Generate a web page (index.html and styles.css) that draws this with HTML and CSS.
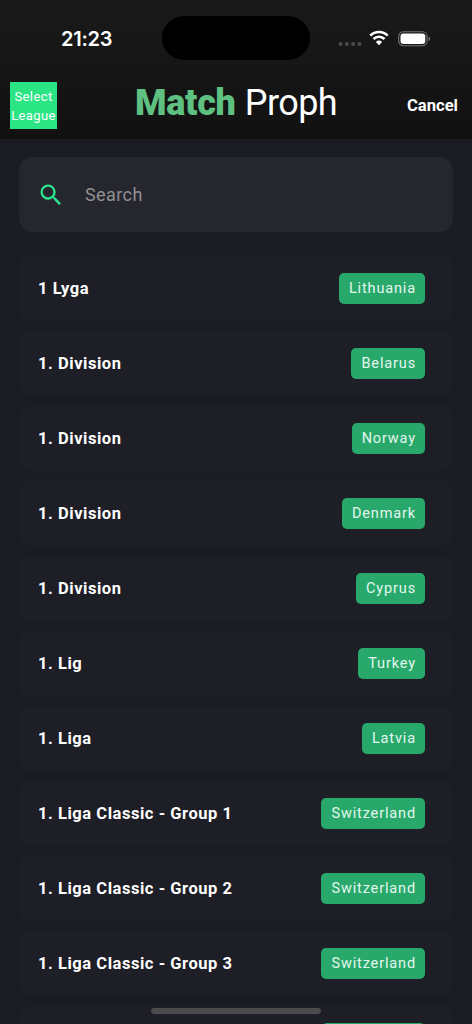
FILE: index.html
```
<!DOCTYPE html>
<html lang="en">
<head>
<meta charset="utf-8">
<title>Match Proph</title>
<link rel="stylesheet" href="styles.css">
</head>
<body>
<div class="screen">
  <header class="header">
    <div class="status">
      <span class="time">21:23</span>
      <span class="island"></span>
      <div class="indicators">
        <svg class="dots" width="24" height="6" viewBox="0 0 24 6" fill="#4b4b4b"><circle cx="2.5" cy="3" r="2.1"/><circle cx="8.8" cy="3" r="2.1"/><circle cx="15.1" cy="3" r="2.1"/><circle cx="21.4" cy="3" r="2.1"/></svg>
        <svg class="wifi" width="20" height="16" viewBox="0 0 20 16"><path d="M1.3 5.6a12.3 12.3 0 0 1 17.4 0M4.5 9a7.8 7.8 0 0 1 11 0" fill="none" stroke="#fff" stroke-width="2.7"/><path d="M6.9 11.9a4.4 4.4 0 0 1 6.2 0L10 15.2z" fill="#fff"/></svg>
        <svg class="battery" width="33" height="16" viewBox="0 0 33 16"><rect x=".7" y=".7" width="28.4" height="14" rx="4.6" fill="none" stroke="#747474" stroke-width="1.1"/><rect x="2.5" y="2.4" width="24.8" height="10.6" rx="3" fill="#fff"/><path d="M30.6 5.4c2 .7 2 4 0 4.7z" fill="#747474"/></svg>
      </div>
    </div>
    <div class="toolbar">
      <button class="select">Select<br>League</button>
      <h1 class="brand"><b class="brand-match">Match</b><span class="brand-proph">Proph</span></h1>
      <button class="cancel">Cancel</button>
    </div>
  </header>
  <main class="content">
    <div class="search">
      <svg class="search-icon" width="28" height="28" viewBox="0 0 24 24" fill="#2be58a"><path d="M15.5 14h-.79l-.28-.27A6.47 6.47 0 0 0 16 9.5 6.5 6.5 0 1 0 9.5 16c1.61 0 3.09-.59 4.23-1.57l.27.28v.79l5 4.99L20.49 19l-4.99-5zm-6 0C7.01 14 5 11.99 5 9.5S7.01 5 9.5 5 14 7.01 14 9.5 11.99 14 9.5 14z"/></svg>
      <span class="placeholder">Search</span>
    </div>
    <ul class="leagues">
      <li class="league"><b class="name">1 Lyga</b><span class="country">Lithuania</span></li>
      <li class="league"><b class="name">1. Division</b><span class="country">Belarus</span></li>
      <li class="league"><b class="name">1. Division</b><span class="country">Norway</span></li>
      <li class="league"><b class="name">1. Division</b><span class="country">Denmark</span></li>
      <li class="league"><b class="name">1. Division</b><span class="country">Cyprus</span></li>
      <li class="league"><b class="name">1. Lig</b><span class="country">Turkey</span></li>
      <li class="league"><b class="name">1. Liga</b><span class="country">Latvia</span></li>
      <li class="league"><b class="name">1. Liga Classic - Group 1</b><span class="country">Switzerland</span></li>
      <li class="league"><b class="name">1. Liga Classic - Group 2</b><span class="country">Switzerland</span></li>
      <li class="league"><b class="name">1. Liga Classic - Group 3</b><span class="country">Switzerland</span></li>
      <li class="league"><span class="name"></span><span class="country country-wide"></span></li>
    </ul>
  </main>
  <div class="home-bar"></div>
</div>
</body>
</html>
```
FILE: styles.css
```
* { box-sizing: border-box; }
body { margin: 0; background: #1b1b24; font-family: Roboto, sans-serif; color: #fff; }
button { border: 0; background: none; color: inherit; font-family: inherit; padding: 0; }
.screen { position: relative; height: 1024px; overflow: hidden; }
.header { height: 139px; background: linear-gradient(#1a1a1a, #111); }
.status { height: 82px; padding: 16px 41px 0 61px; display: grid; grid-template-columns: 101px 148px 1fr; align-items: start; }
.time { font: 600 20px/24px Inter, sans-serif; letter-spacing: -.25px; margin-top: 11px; }
.island { height: 44px; border-radius: 22px; background: #000; }
.indicators { display: flex; justify-content: flex-end; height: 44px; align-items: center; }
.dots { margin: 11px 7px 0 0; }
.wifi { margin-right: 9px; }
.battery { margin: 1px 0 0; }
.toolbar { display: grid; grid-template-columns: 125px 202px 1fr; padding: 0 14px 0 10px; height: 57px; }
.select { width: 47px; height: 47px; background: #2be585; font-size: 13px; line-height: 19px; letter-spacing: .4px; white-space: nowrap; display: flex; align-items: center; justify-content: center; }
.brand { margin: 0; display: flex; justify-content: space-between; font-size: 36px; line-height: 42px; font-weight: 400; white-space: nowrap; }
.brand-match { font-weight: 900; color: #5fc181; letter-spacing: -.3px; }
.brand-proph { letter-spacing: -.6px; }
.cancel { justify-self: end; align-self: start; font-weight: 700; font-size: 16.6px; line-height: 20px; margin-top: 14px; }
.content { padding: 18px 19px 0; }
.search { height: 75px; border-radius: 14px; background: #26262f; display: flex; align-items: center; padding-left: 18px; }
.placeholder { margin-left: 20px; font-size: 18px; letter-spacing: .4px; color: #909092; }
.leagues { list-style: none; margin: 24px 0 0; padding: 0; display: grid; gap: 10px; }
.league { height: 65px; border-radius: 10px; background: #1e1e27; display: flex; align-items: center; justify-content: space-between; padding: 0 28px 0 19px; }
.name { font-size: 16.5px; line-height: 21px; font-weight: 700; letter-spacing: .54px; }
.country { height: 31px; line-height: 31px; padding: 0 9px 0 10px; border-radius: 5px; background: #29a86b; font-size: 14.5px; letter-spacing: .86px; color: #e2f7ed; }
.country-wide { width: 103px; }
.home-bar { position: absolute; left: 151px; top: 1008px; width: 170px; height: 6px; border-radius: 3px; background: #4b4b4b; }
```
